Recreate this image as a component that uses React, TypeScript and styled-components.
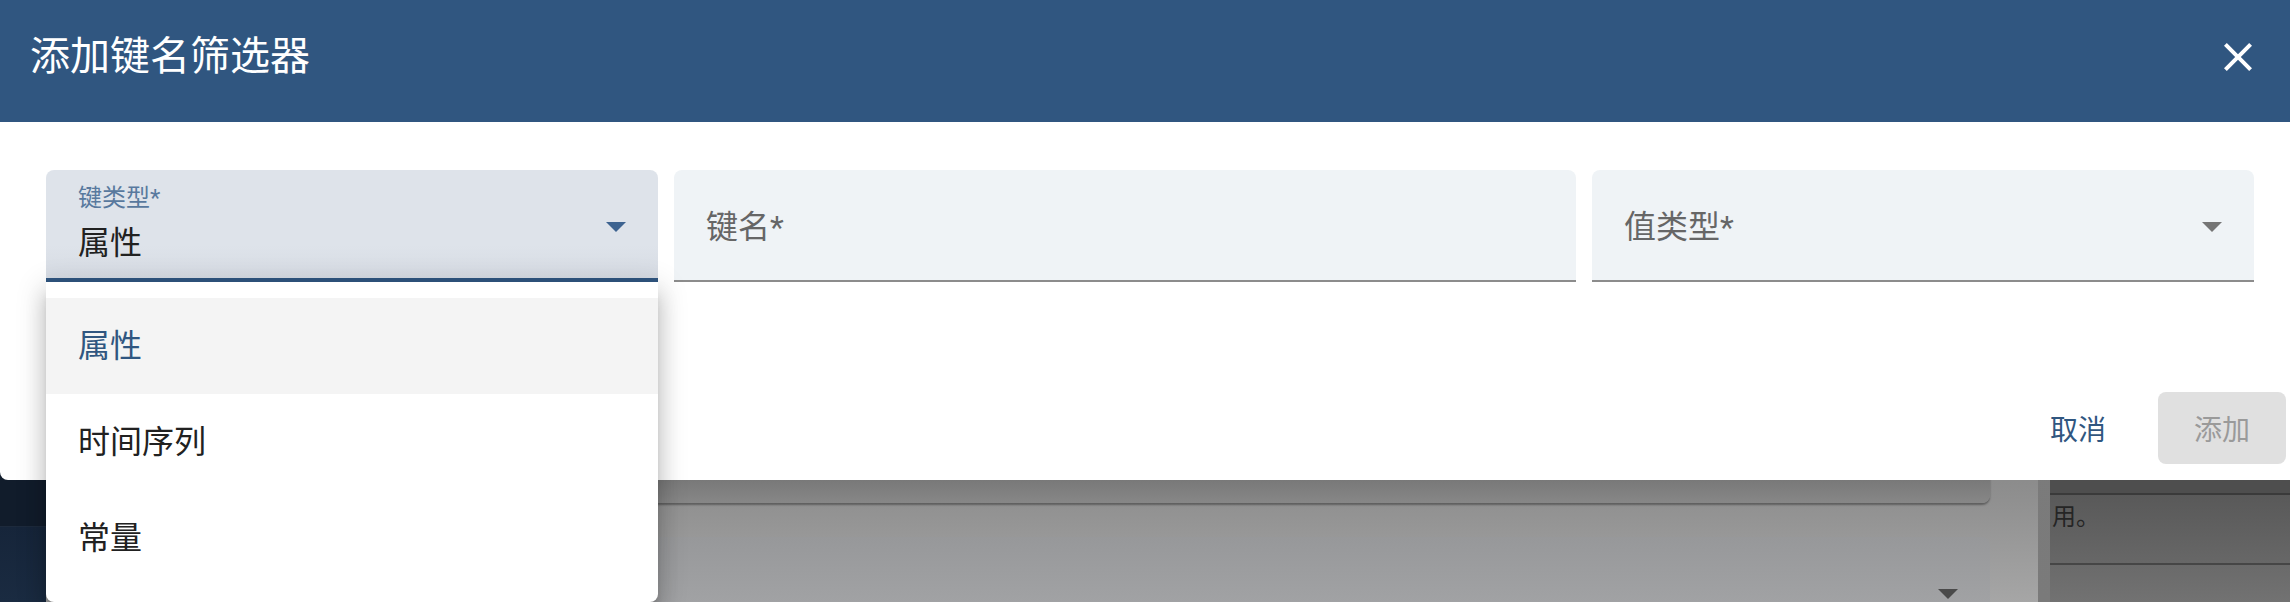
import React from "react";
import styled, { createGlobalStyle } from "styled-components";

const GlobalStyle = createGlobalStyle`
  html, body { margin: 0; padding: 0; overflow: hidden; }
  body {
    font-family: Roboto, "Noto Sans CJK SC", "Noto Sans", sans-serif;
    background: #8a8a8a;
  }
  * { box-sizing: border-box; }
`;

const Page = styled.div`
  position: relative;
  width: 2290px;
  height: 602px;
  overflow: hidden;
`;

/* ---------- dimmed application behind the dialog ---------- */
const AppShell = styled.div`
  display: flex;
  height: 100%;
`;

const Sidebar = styled.div`
  width: 46px;
  flex: none;
  display: flex;
  flex-direction: column;
`;

const SidebarTop = styled.div`
  height: 527px;
  flex: none;
  background: #111c2b;
  border-bottom: 1px solid #1d2a3c;
`;

const SidebarRest = styled.div`
  flex: 1;
  background: linear-gradient(to bottom, #16253a, #1a2b41);
`;

const Main = styled.div`
  flex: 1;
  display: flex;
  flex-direction: column;
  gap: 34px;
  padding: 0 48px 0 24px;
  background: linear-gradient(to bottom, #8a8a8a 0, #8c8c8c 482px, #a6a6a6 602px);
`;

const Card = styled.div`
  height: 503px;
  flex: none;
  border-radius: 0 0 8px 8px;
  background: linear-gradient(to bottom, #767676 476px, #878787 503px);
  box-shadow: 0 2px 2px rgba(0, 0, 0, 0.35);
`;

const SelectBox = styled.div`
  flex: 1;
  border-radius: 8px 8px 0 0;
  background: linear-gradient(to bottom, #97989a, #a1a2a4);
  display: flex;
  justify-content: flex-end;
  align-items: flex-start;
  padding: 52px 32px 0 0;
`;

const Strip = styled.div`
  width: 12px;
  flex: none;
  background: linear-gradient(to bottom, #7e7e7e, #7a7a7a);
`;

const RightPanel = styled.div`
  width: 240px;
  flex: none;
  display: flex;
  flex-direction: column;
  overflow: hidden;
`;

const PanelHead = styled.div`
  height: 495px;
  flex: none;
  background: #4e4e4e;
  border-bottom: 2px solid #3a3a3a;
`;

const PanelRow = styled.div`
  height: 70px;
  flex: none;
  background: linear-gradient(to bottom, #595959, #676767);
  border-bottom: 2px solid #464646;
  padding: 10px 0 0 2px;
  font-size: 24px;
  line-height: 24px;
  color: #252525;
  white-space: nowrap;
`;

const PanelRest = styled.div`
  flex: 1;
  background: linear-gradient(to bottom, #6a6a6a, #727272);
`;

/* ---------- dialog ---------- */
const Dialog = styled.div`
  position: absolute;
  top: 0;
  left: 0;
  width: 2302px;
  background: #ffffff;
  border-radius: 0 0 8px 8px;
  display: flex;
  flex-direction: column;
`;

const Toolbar = styled.div`
  height: 122px;
  background: #305680;
  display: flex;
  align-items: center;
  justify-content: space-between;
  padding: 0 24px 8px 30px;
`;

const Title = styled.h2`
  margin: 0;
  font-size: 40px;
  line-height: 40px;
  font-weight: 400;
  color: #ffffff;
`;

const IconButton = styled.button`
  width: 80px;
  height: 80px;
  border: none;
  background: transparent;
  padding: 0;
  display: flex;
  align-items: center;
  justify-content: center;
  color: #ffffff;
`;

const Content = styled.div`
  padding: 48px 48px 0 46px;
`;

const FieldRow = styled.div`
  display: grid;
  grid-template-columns: 612fr 902fr 662fr;
  gap: 16px;
`;

const Field = styled.div<{ $focused?: boolean }>`
  position: relative;
  height: 112px;
  display: flex;
  align-items: center;
  padding: ${(p) => (p.$focused ? "6px" : "4px")} 32px 0 32px;
  border-radius: 8px 8px 0 0;
  background: ${(p) =>
    p.$focused
      ? "linear-gradient(to bottom, #dee3ea 0, #dee3ea 70%, #d6dbe3 100%)"
      : "#eff3f6"};
  border-bottom: ${(p) => (p.$focused ? "4px solid #305680" : "2px solid #8c8c8c")};
`;

const FieldText = styled.div`
  flex: 1;
  align-self: flex-start;
  margin-top: 10px;
  display: flex;
  flex-direction: column;
  gap: 17px;
`;

const FloatLabel = styled.span`
  font-size: 24px;
  line-height: 24px;
  color: #58799e;
`;

const Value = styled.span`
  font-size: 32px;
  line-height: 32px;
  color: #212121;
`;

const Placeholder = styled.span`
  flex: 1;
  font-size: 32px;
  line-height: 32px;
  color: #666666;
`;

const Menu = styled.div`
  position: absolute;
  top: calc(100% + 4px);
  left: 0;
  width: 100%;
  padding: 16px 0;
  background: #ffffff;
  border-radius: 0 0 8px 8px;
  box-shadow: 0 10px 10px -5px rgba(0, 0, 0, 0.2), 0 16px 20px 2px rgba(0, 0, 0, 0.14),
    0 6px 28px 5px rgba(0, 0, 0, 0.12);
  z-index: 2;
`;

const MenuItem = styled.div<{ $selected?: boolean }>`
  height: 96px;
  display: flex;
  align-items: center;
  padding: 0 32px;
  font-size: 32px;
  line-height: 32px;
  color: ${(p) => (p.$selected ? "#305680" : "#212121")};
  background: ${(p) => (p.$selected ? "#f4f4f4" : "transparent")};
`;

const Actions = styled.div`
  margin-top: 110px;
  display: flex;
  justify-content: flex-end;
  align-items: center;
  gap: 20px;
  padding: 0 16px 16px;
`;

const TextButton = styled.button`
  height: 72px;
  padding: 0 32px;
  border: none;
  background: transparent;
  font-family: inherit;
  font-size: 28px;
  font-weight: 400;
  color: #305680;
`;

const FilledButton = styled.button`
  width: 128px;
  height: 72px;
  border: none;
  border-radius: 8px;
  background: #e0e0e0;
  font-family: inherit;
  font-size: 28px;
  font-weight: 400;
  color: #9a9a9a;
`;

const Arrow = ({ color }: { color: string }) => (
  <svg width="20" height="10" viewBox="0 0 20 10" style={{ flex: "none" }}>
    <polygon points="0,0 20,0 10,10" fill={color} />
  </svg>
);

const CloseIcon = () => (
  <svg width="48" height="48" viewBox="0 0 24 24">
    <path
      fill="currentColor"
      d="M19 6.41L17.59 5 12 10.59 6.41 5 5 6.41 10.59 12 5 17.59 6.41 19 12 13.41 17.59 19 19 17.59 13.41 12z"
    />
  </svg>
);

const options = ["属性", "时间序列", "常量"];

export default function App() {
  return (
    <Page>
      <GlobalStyle />
      <AppShell>
        <Sidebar>
          <SidebarTop />
          <SidebarRest />
        </Sidebar>
        <Main>
          <Card />
          <SelectBox>
            <Arrow color="#4a4a4a" />
          </SelectBox>
        </Main>
        <Strip />
        <RightPanel>
          <PanelHead />
          <PanelRow>用。</PanelRow>
          <PanelRest />
        </RightPanel>
      </AppShell>

      <Dialog>
        <Toolbar>
          <Title>添加键名筛选器</Title>
          <IconButton aria-label="close">
            <CloseIcon />
          </IconButton>
        </Toolbar>
        <Content>
          <FieldRow>
            <Field $focused>
              <FieldText>
                <FloatLabel>键类型*</FloatLabel>
                <Value>属性</Value>
              </FieldText>
              <Arrow color="#3d6390" />
              <Menu>
                {options.map((o, i) => (
                  <MenuItem key={o} $selected={i === 0}>
                    {o}
                  </MenuItem>
                ))}
              </Menu>
            </Field>
            <Field>
              <Placeholder>键名*</Placeholder>
            </Field>
            <Field>
              <Placeholder>值类型*</Placeholder>
              <Arrow color="#757575" />
            </Field>
          </FieldRow>
        </Content>
        <Actions>
          <TextButton>取消</TextButton>
          <FilledButton>添加</FilledButton>
        </Actions>
      </Dialog>
    </Page>
  );
}
